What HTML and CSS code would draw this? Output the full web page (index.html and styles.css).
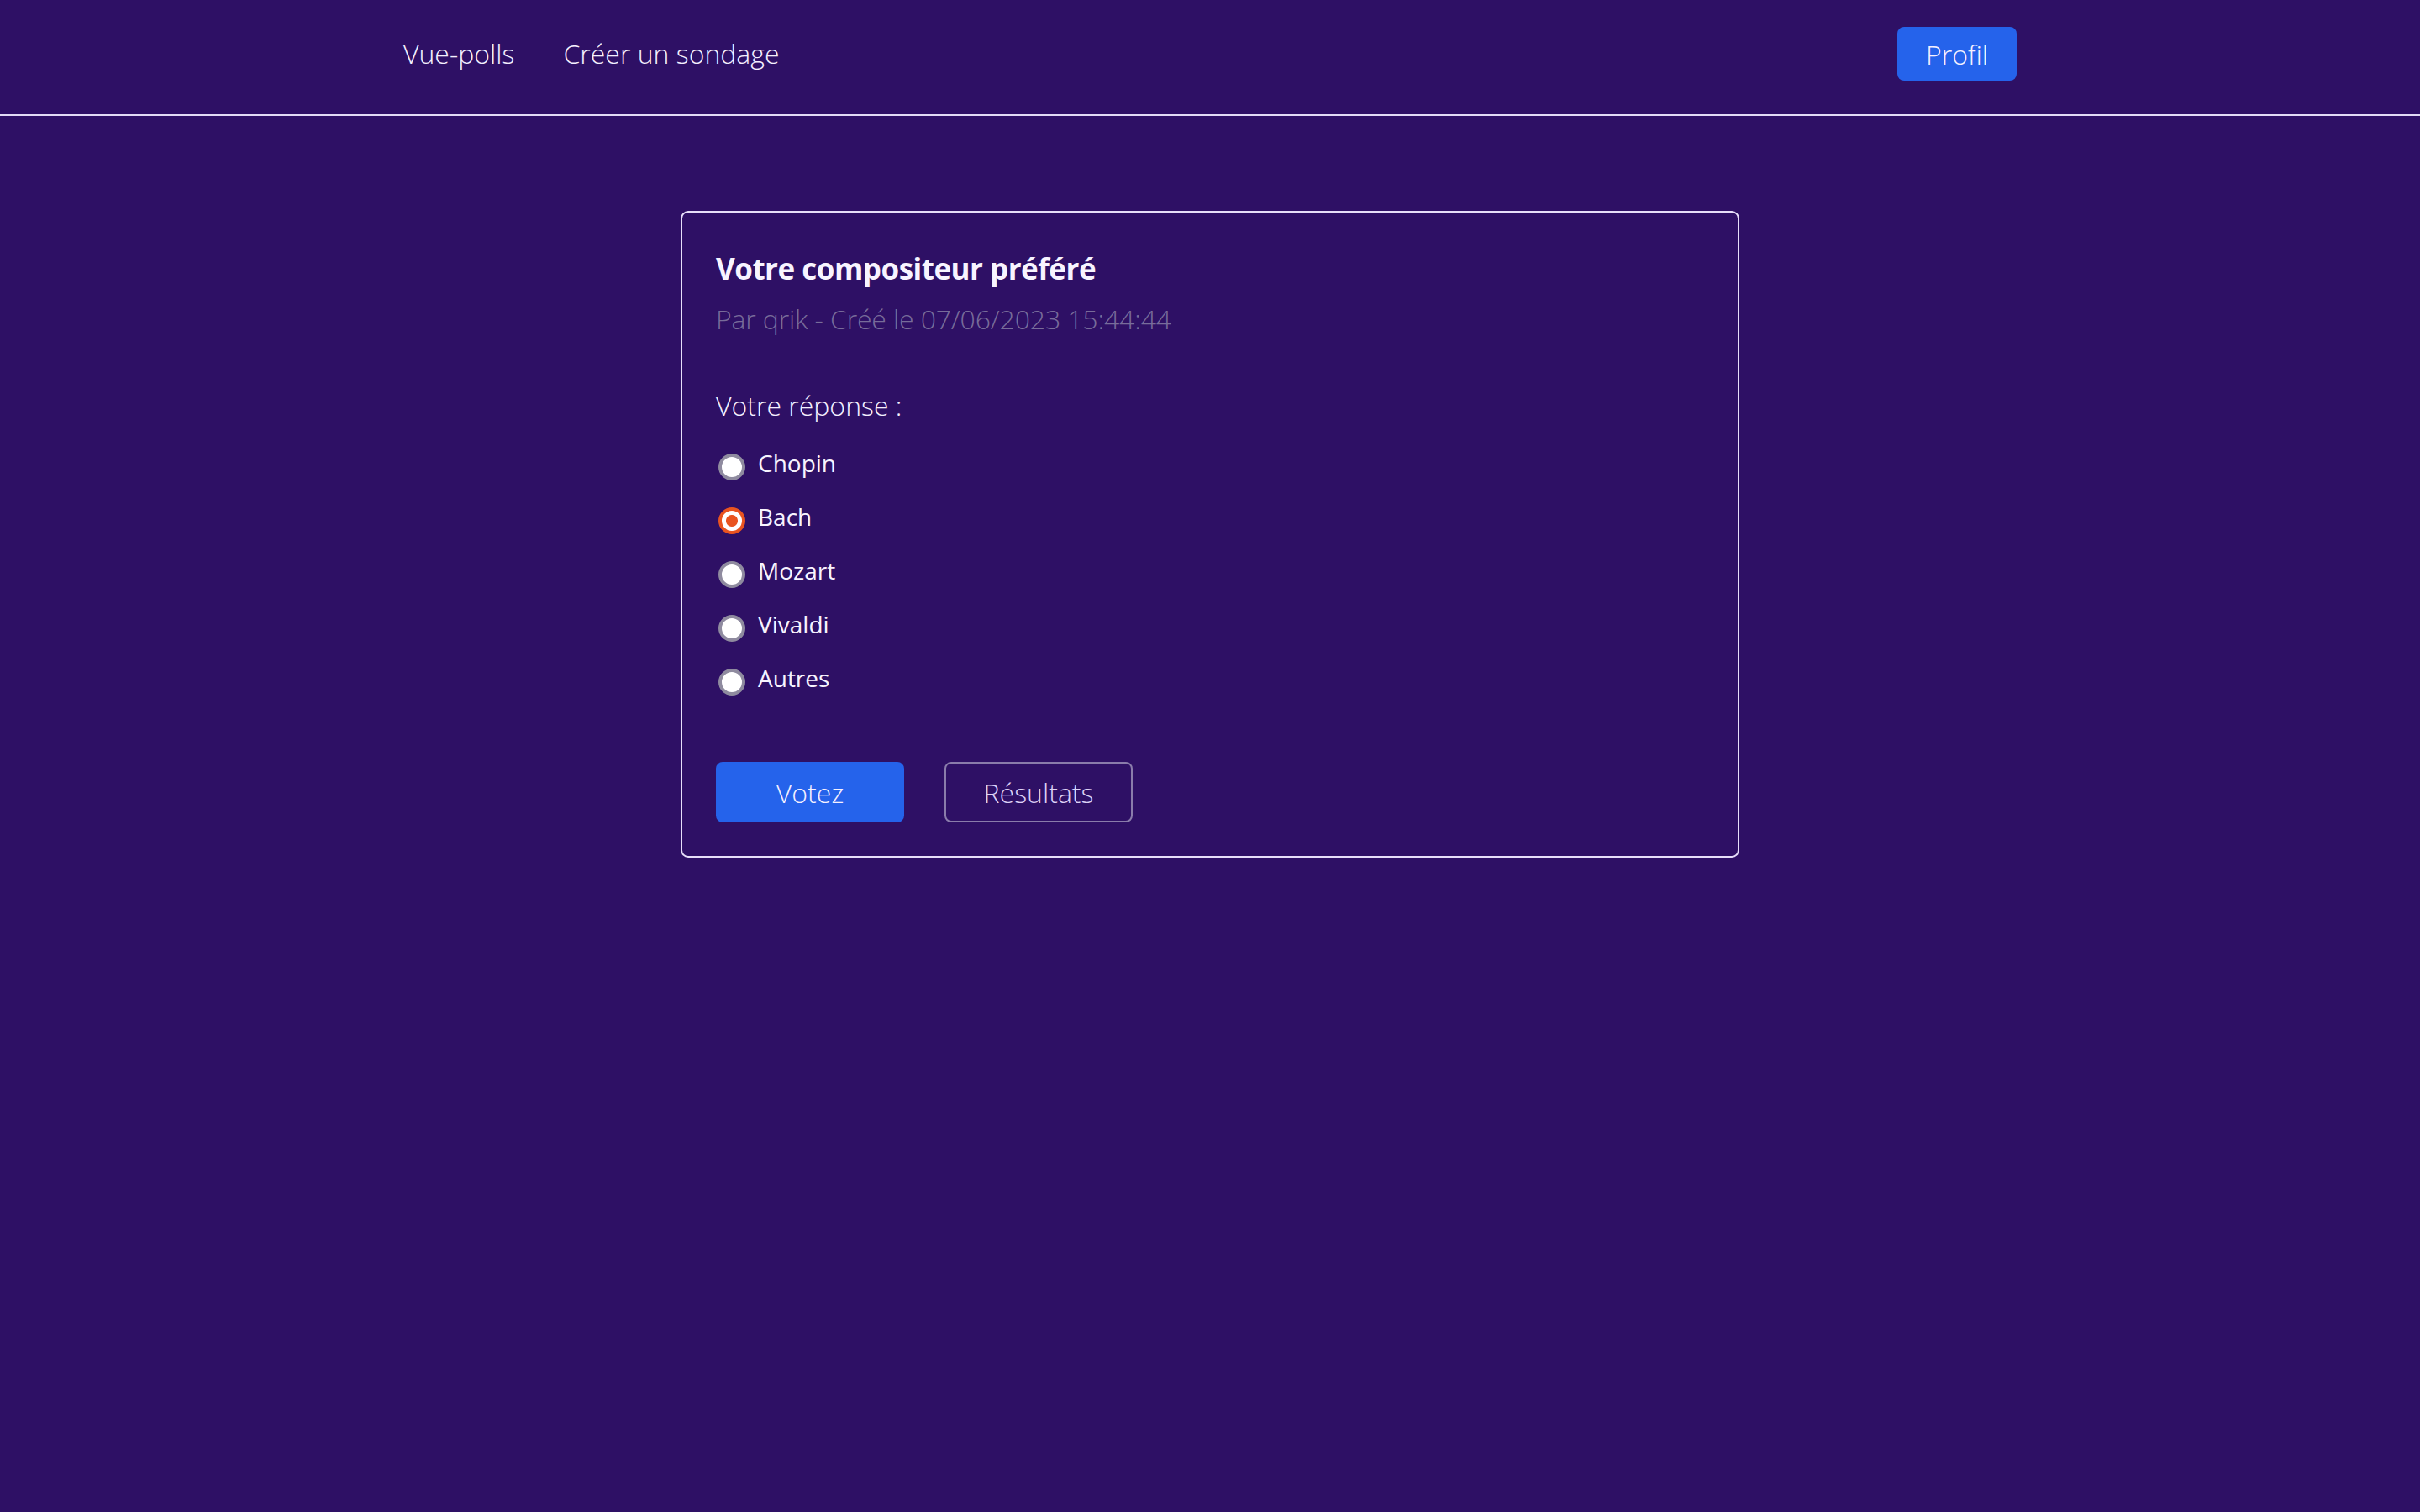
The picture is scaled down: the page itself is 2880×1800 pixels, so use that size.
FILE: index.html
```html
<!DOCTYPE html>
<html lang="fr">
<head>
<meta charset="utf-8">
<title>Vue-polls</title>
<link rel="stylesheet" href="styles.css">
</head>
<body>
<header class="topbar">
  <div class="topbar-inner">
    <nav class="nav">
      <a class="nav-link" href="#">Vue-polls</a>
      <a class="nav-link" href="#">Créer un sondage</a>
    </nav>
    <a class="btn-profile" href="#">Profil</a>
  </div>
</header>
<main class="main">
  <section class="card">
    <h1 class="card-title">Votre compositeur préféré</h1>
    <p class="card-meta">Par qrik - Créé le 07/06/2023 15:44:44</p>
    <p class="question">Votre réponse :</p>
    <div class="options">
      <label class="option"><input type="radio" name="c" class="radio"><span>Chopin</span></label>
      <label class="option"><input type="radio" name="c" class="radio" checked><span>Bach</span></label>
      <label class="option"><input type="radio" name="c" class="radio"><span>Mozart</span></label>
      <label class="option"><input type="radio" name="c" class="radio"><span>Vivaldi</span></label>
      <label class="option"><input type="radio" name="c" class="radio"><span>Autres</span></label>
    </div>
    <div class="actions">
      <button class="btn btn-primary" type="button">Votez</button>
      <button class="btn btn-outline" type="button">Résultats</button>
    </div>
  </section>
</main>
</body>
</html>
```
FILE: styles.css
```css
* { box-sizing: border-box; }
html, body { margin: 0; padding: 0; }
body {
  background: #2e1065;
  color: #f5f0ff;
  font-family: "Open Sans", "Noto Sans", sans-serif;
  font-weight: 300;
  min-height: 1800px;
}
.topbar {
  border-bottom: 2px solid #e2daf6;
  padding: 32px 0 40px;
}
.topbar-inner {
  width: 1920px;
  margin: 0 auto;
  display: flex;
  align-items: center;
  justify-content: space-between;
  height: 64px;
}
.nav { display: flex; gap: 58px; }
.nav-link {
  color: #f5f0ff;
  text-decoration: none;
  font-size: 32px;
  line-height: 48px;
}
.btn-profile {
  display: flex;
  align-items: center;
  justify-content: center;
  width: 142px;
  height: 64px;
  background: #2563eb;
  color: #f5f0ff;
  border-radius: 8px;
  text-decoration: none;
  font-size: 32px;
}
.main { padding-top: 113px; }
.card {
  width: 1260px;
  margin: 0 auto;
  border: 2px solid #e6def9;
  border-radius: 9px;
  padding: 40px 40px 40px;
}
.card-title {
  margin: 0;
  font-size: 35px;
  line-height: 54px;
  font-weight: 700;
  letter-spacing: -0.5px;
  color: #f8f4ff;
}
.card-meta {
  margin: 9px 0 0;
  font-size: 32px;
  line-height: 48px;
  letter-spacing: -0.15px;
  color: #786c9a;
}
.question {
  margin: 55px 0 0;
  font-size: 32px;
  line-height: 48px;
}
.options {
  margin-top: 23px;
  display: flex;
  flex-direction: column;
  gap: 22px;
}
.option {
  display: flex;
  align-items: flex-start;
  gap: 15px;
  font-size: 28px;
  line-height: 42px;
  font-weight: 500;
  color: #f8f4ff;
}
.radio {
  appearance: none;
  -webkit-appearance: none;
  margin: 10px 0 0 3px;
  width: 32px;
  height: 32px;
  border-radius: 50%;
  border: 4px solid #8f8b9f;
  background: #ffffff;
  flex: none;
}
.radio:checked {
  border-color: #e95420;
  background: radial-gradient(circle, #e95420 0 6.5px, #ffffff 7.5px);
}
.actions {
  margin-top: 79px;
  display: flex;
  gap: 48px;
}
.btn {
  width: 224px;
  height: 72px;
  border-radius: 8px;
  font-family: "Open Sans", "Noto Sans", sans-serif;
  font-weight: 300;
  font-size: 32px;
  padding: 0;
}
.btn-primary {
  background: #2563eb;
  border: none;
  color: #f5f0ff;
}
.btn-outline {
  background: transparent;
  border: 2px solid #8a7cab;
  color: #ddd2f6;
}
```
